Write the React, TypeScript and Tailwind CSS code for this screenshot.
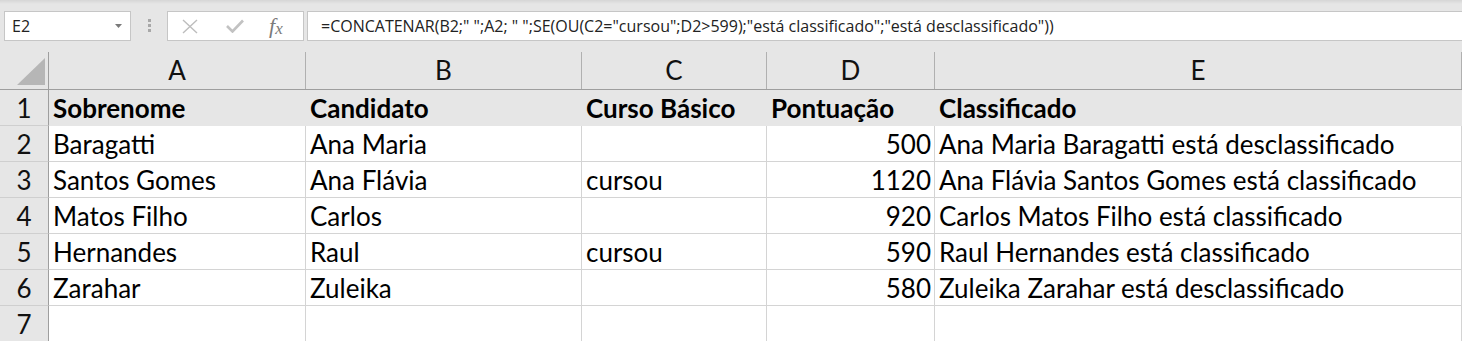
import React from 'react';

const cellFont = { fontFamily: 'Lato, "Noto Sans", sans-serif' };

const columns = [
  { key: 'A', width: 'w-[257px]' },
  { key: 'B', width: 'w-[276px]' },
  { key: 'C', width: 'w-[185px]' },
  { key: 'D', width: 'w-[168px]' },
  { key: 'E', width: 'flex-1' },
];

const rows: string[][] = [
  ['Sobrenome', 'Candidato', 'Curso Básico', 'Pontuação', 'Classificado'],
  ['Baragatti', 'Ana Maria', '', '500', 'Ana Maria Baragatti está desclassificado'],
  ['Santos Gomes', 'Ana Flávia', 'cursou', '1120', 'Ana Flávia Santos Gomes está classificado'],
  ['Matos Filho', 'Carlos', '', '920', 'Carlos Matos Filho está classificado'],
  ['Hernandes', 'Raul', 'cursou', '590', 'Raul Hernandes está classificado'],
  ['Zarahar', 'Zuleika', '', '580', 'Zuleika Zarahar está desclassificado'],
  ['', '', '', '', ''],
];

const FormulaBar: React.FC = () => (
  <div className="relative h-[52px] bg-[#e6e6e6] flex items-start pt-[11px]">
    <div className="absolute top-0 left-0 right-0 h-[4px] bg-gradient-to-b from-[#d6d6d6] to-[#e6e6e6]" />
    <div className="relative ml-[4px] w-[127px] h-[30px] bg-white border border-[#c6c6c6] flex items-center justify-between pl-[7px] pr-[8px]">
      <span className="text-[16px] text-[#222]" style={{ fontFamily: '"Open Sans", sans-serif' }}>E2</span>
      <svg width="7" height="4" viewBox="0 0 7 4">
        <path d="M0 0 L7 0 L3.5 4 Z" fill="#7a7a7a" />
      </svg>
    </div>
    <div className="relative ml-[17px] mt-[8px] flex flex-col gap-[2px]">
      <div className="w-[3px] h-[3px] bg-[#a8a8a8]" />
      <div className="w-[3px] h-[3px] bg-[#a8a8a8]" />
      <div className="w-[3px] h-[3px] bg-[#a8a8a8]" />
    </div>
    <div className="relative ml-[16px] w-[137px] h-[30px] bg-white border border-[#c6c6c6] flex items-center">
      <svg className="ml-[14px]" width="16" height="15" viewBox="0 0 16 15">
        <path d="M1 1 L15 14 M15 1 L1 14" stroke="#bdbdbd" strokeWidth="1.4" fill="none" />
      </svg>
      <svg className="ml-[28px]" width="18" height="14" viewBox="0 0 18 14">
        <path d="M1 7 L6.5 12.5 L17 1.5" stroke="#c2c2c2" strokeWidth="2.6" fill="none" />
      </svg>
      <div className="ml-[25px] flex items-end text-[#7a7a7a] italic" style={{ fontFamily: '"Liberation Serif", serif' }}>
        <span className="text-[22px] leading-none">f</span>
        <span className="text-[17px] leading-none">x</span>
      </div>
    </div>
    <div className="relative ml-[3px] flex-1 h-[30px] bg-white border-y border-l border-[#c6c6c6] flex items-center pl-[13px]">
      <span className="text-[16px] text-[#222] whitespace-nowrap" style={{ fontFamily: '"Open Sans", sans-serif' }}>
        =CONCATENAR(B2;" ";A2; " ";SE(OU(C2="cursou";D2&gt;599);"está classificado";"está desclassificado"))
      </span>
    </div>
  </div>
);

const ColumnHeader: React.FC = () => (
  <div className="flex h-[38px] bg-[#e6e6e6] border-b border-[#9e9e9e]" style={cellFont}>
    <div className="w-[49px] border-r border-[#9e9e9e] relative">
      <svg className="absolute left-0 top-0" width="48" height="37" viewBox="0 0 48 37">
        <path d="M17 33 L45 33 L45 6 Z" fill="#b6b6b6" />
      </svg>
    </div>
    {columns.map((c) => (
      <div
        key={c.key}
        className={`${c.width} border-r border-[#b0b0b0] text-center text-[26px] leading-[37px] text-[#111]`}
      >
        {c.key}
      </div>
    ))}
  </div>
);

const Grid: React.FC = () => (
  <div style={cellFont}>
    {rows.map((row, ri) => {
      const header = ri === 0;
      return (
        <div key={ri} className="flex h-[36px]">
          <div className="w-[49px] bg-[#e6e6e6] border-r border-b border-r-[#9e9e9e] border-b-[#cfcfcf] text-center text-[26px] leading-[36px] text-[#111]">
            {ri + 1}
          </div>
          {row.map((v, ci) => {
            const numeric = ci === 3 && !header;
            const base = header
              ? 'bg-[#e6e6e6] font-bold'
              : 'bg-white border-r border-b border-[#d4d4d4]';
            return (
              <div
                key={ci}
                className={`${columns[ci].width} ${base} text-[26px] leading-[36px] text-black whitespace-nowrap overflow-hidden ${
                  numeric ? 'text-right pr-[3px]' : 'pl-[4px]'
                }`}
              >
                {v}
              </div>
            );
          })}
        </div>
      );
    })}
  </div>
);

export default function App() {
  return (
    <div className="w-[1462px] h-[341px] overflow-hidden bg-white">
      <FormulaBar />
      <ColumnHeader />
      <Grid />
    </div>
  );
}
